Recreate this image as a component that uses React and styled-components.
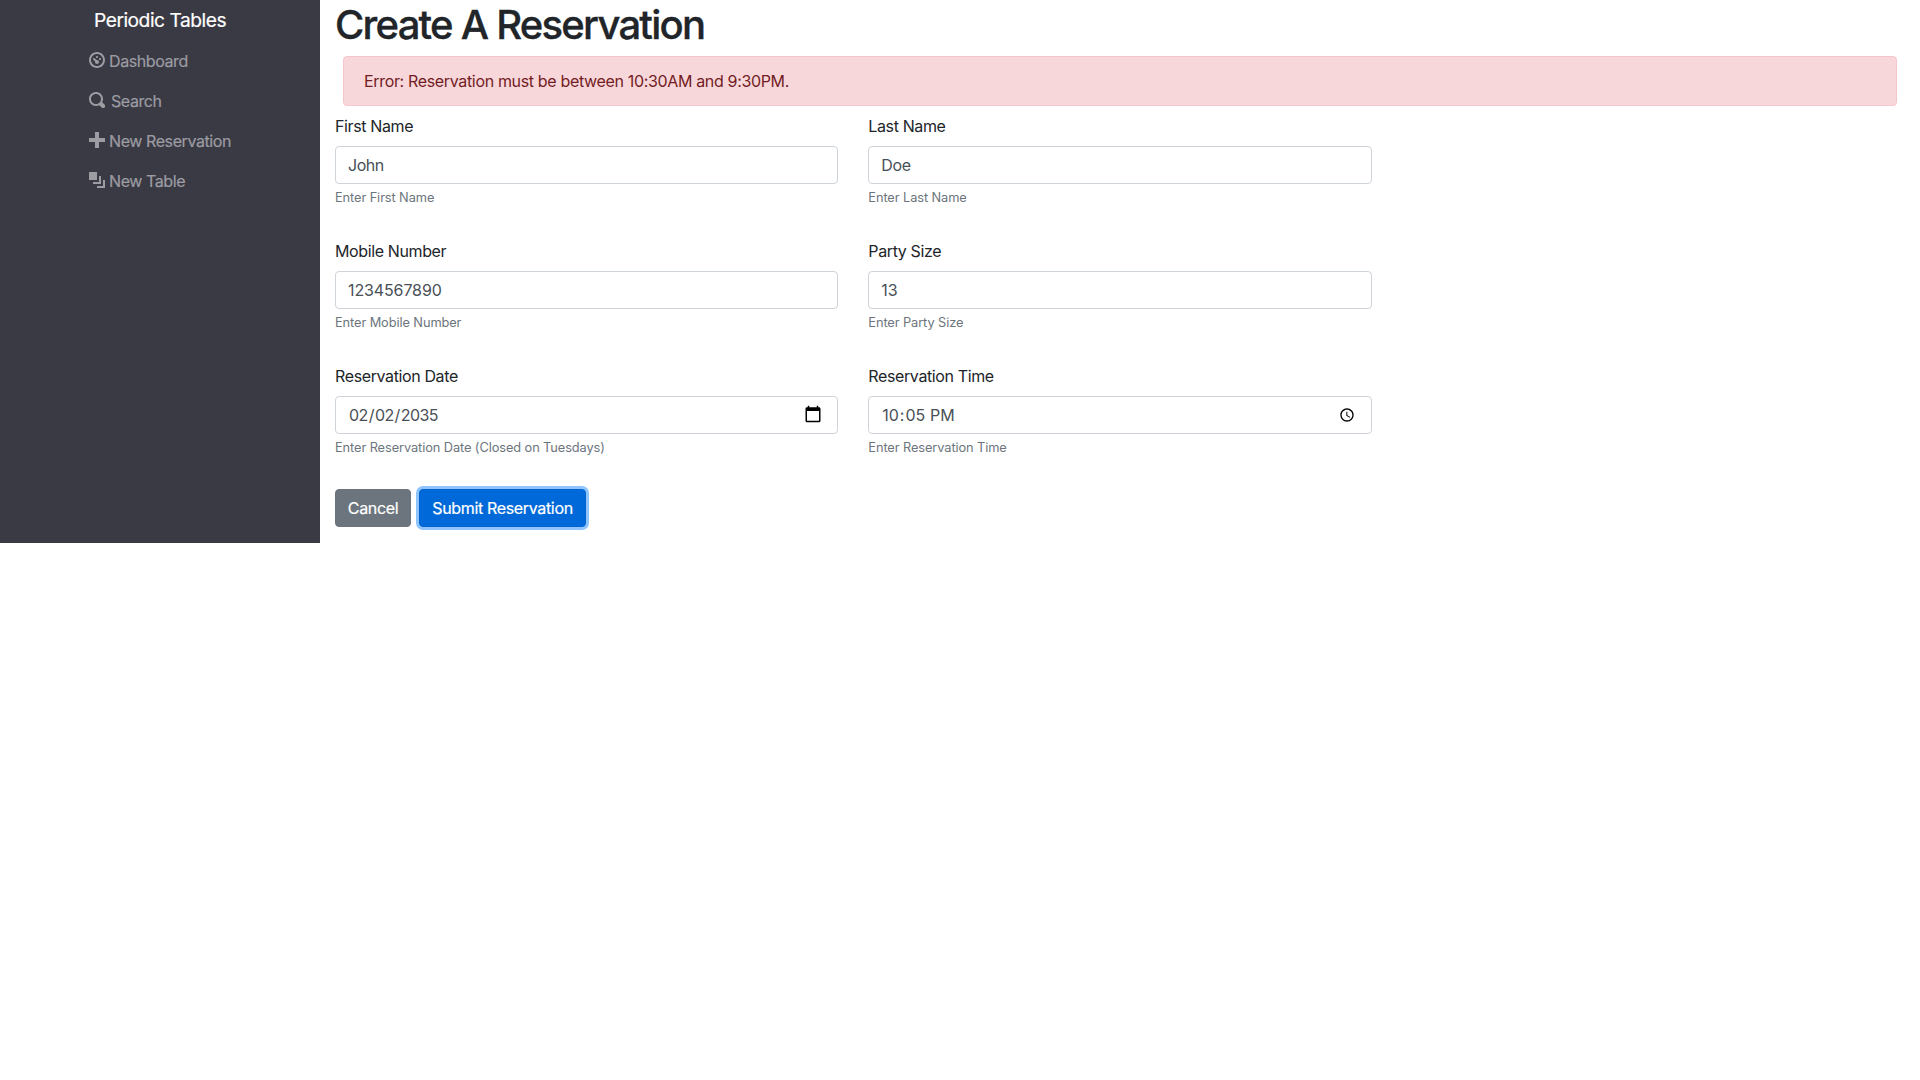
import React from "react";
import styled, { createGlobalStyle } from "styled-components";

const GlobalStyle = createGlobalStyle`
  *, *::before, *::after { box-sizing: border-box; }
  body {
    margin: 0;
    background: #fff;
    color: #212529;
    font-family: Inter, "Liberation Sans", sans-serif;
    font-size: 16px;
    line-height: 24px;
    letter-spacing: -0.34px;
  }
`;

const Page = styled.div`
  display: flex;
  align-items: stretch;
`;

const Sidebar = styled.nav`
  flex: 0 0 320px;
  height: 543px;
  padding: 5px 0 0 89px;
  background: #3a3a45;
  -webkit-text-stroke: 0.2px;
`;

const Brand = styled.a`
  display: block;
  padding-left: 5px;
  margin-bottom: 6px;
  color: #fff;
  font-size: 19.2px;
  line-height: 30px;
  letter-spacing: -0.48px;
`;

const NavList = styled.ul`
  list-style: none;
  margin: 0;
  padding: 0;
`;

const NavLink = styled.a`
  display: flex;
  align-items: center;
  height: 40px;
  gap: ${(p) => p.$gap || 4}px;
  color: #9c9ca2;
  letter-spacing: -0.41px;
`;

const NavIcon = styled.svg`
  display: block;
  width: 16px;
  height: 16px;
  margin-bottom: 2px;
  fill: currentColor;
`;

const Main = styled.main`
  flex: 1;
  padding: 0 15px;
`;

const Title = styled.h1`
  margin: 0;
  padding-top: 1px;
  height: 56px;
  font-size: 40px;
  line-height: 48px;
  font-weight: 500;
  letter-spacing: -1.76px;
  -webkit-text-stroke: 0.35px;
`;

const Alert = styled.div`
  margin: 0 8px 8px;
  padding: 12px 20px;
  border: 1px solid #f5c6cb;
  border-radius: 4px;
  background: #f8d7da;
  color: #721c24;
`;

const Fields = styled.div`
  display: grid;
  grid-template-columns: 503.33px 503.33px;
  column-gap: 30px;
  grid-auto-rows: 125px;
`;

const Label = styled.label`
  display: block;
  margin-bottom: 8px;
  letter-spacing: -0.38px;
`;

const calendarIcon = encodeURIComponent(
  '<svg xmlns="http://www.w3.org/2000/svg" viewBox="0 0 24 24"><path d="M20 3h-1V1h-2v2H7V1H5v2H4c-1.1 0-2 .9-2 2v16c0 1.1.9 2 2 2h16c1.1 0 2-.9 2-2V5c0-1.1-.9-2-2-2zm0 18H4V8h16v13z"/></svg>'
);

const Input = styled.input`
  display: block;
  width: 100%;
  height: 38px;
  padding: 6px 12px;
  border: 1px solid #ced4da;
  border-radius: 4px;
  background: #fff;
  color: #495057;
  font: inherit;
  letter-spacing: ${(p) => p.$tracking || "inherit"};
  outline: none;

  &[type="date"]::-webkit-calendar-picker-indicator {
    width: 18px;
    height: 18px;
    padding: 0;
    margin: 0 3px 2px 0;
    background: url("data:image/svg+xml,${calendarIcon}") center / 18px 18px no-repeat;
  }
`;

const Hint = styled.small`
  display: block;
  margin-top: 4px;
  color: #6c757d;
  font-size: 12.8px;
  line-height: 19.2px;
  letter-spacing: -0.09px;
`;

const Actions = styled.div`
  display: flex;
  gap: 8px;
`;

const Button = styled.button`
  width: ${(p) => p.$width}px;
  height: 38px;
  padding: 0;
  border: 1px solid ${(p) => (p.$primary ? "#0062cc" : "#6c757d")};
  border-radius: 4px;
  background: ${(p) => (p.$primary ? "#0069d9" : "#6c757d")};
  box-shadow: ${(p) => (p.$primary ? "0 0 0 3px #8fc5ff" : "none")};
  color: #fff;
  font: inherit;
  letter-spacing: inherit;
  -webkit-text-stroke: 0.2px;
`;

const NAV = [
  {
    label: "Dashboard",
    path: "M4 0c-2.2 0-4 1.8-4 4s1.8 4 4 4 4-1.8 4-4-1.8-4-4-4zm0 1c1.66 0 3 1.34 3 3s-1.34 3-3 3-3-1.34-3-3 1.34-3 3-3zm0 1c-.28 0-.5.22-.5.5s.22.5.5.5.5-.22.5-.5-.22-.5-.5-.5zm-1.66 1a.5.5 0 0 0-.19.84l.91.91c-.02.08-.06.16-.06.25 0 .55.45 1 1 1s1-.45 1-1-.45-1-1-1c-.09 0-.17.04-.25.06l-.91-.91a.5.5 0 0 0-.44-.16.5.5 0 0 0-.06 0zm3.16 0c-.28 0-.5.22-.5.5s.22.5.5.5.5-.22.5-.5-.22-.5-.5-.5z",
  },
  {
    label: "Search",
    gap: 6,
    path: "M3.5 0c-1.93 0-3.5 1.57-3.5 3.5s1.57 3.5 3.5 3.5c.59 0 1.17-.14 1.66-.41a1 1 0 0 0 .13.13l1 1a1.02 1.02 0 1 0 1.44-1.44l-1-1a1 1 0 0 0-.16-.13c.27-.49.44-1.06.44-1.66 0-1.93-1.55-3.5-3.5-3.5zm0 1c1.39 0 2.5 1.11 2.5 2.5 0 .66-.24 1.27-.66 1.72-.01.01-.02.02-.03.03a1 1 0 0 0-.13.13c-.44.4-1.04.63-1.69.63-1.39 0-2.5-1.11-2.5-2.5s1.11-2.5 2.5-2.5z",
  },
  { label: "New Reservation", path: "M3 0v3h-3v2h3v3h2v-3h3v-2h-3v-3h-2z" },
  {
    label: "New Table",
    path: "M0 0v4h4v-4h-4zm5 2v3h-3v1h4v-4h-1zm2 2v3h-3v1h4v-4h-1z",
  },
];

const FIELDS = [
  { id: "first_name", label: "First Name", value: "John", hint: "Enter First Name", tracking: "-0.45px" },
  { id: "last_name", label: "Last Name", value: "Doe", hint: "Enter Last Name", tracking: "-0.4px" },
  { id: "mobile_number", label: "Mobile Number", value: "1234567890", hint: "Enter Mobile Number", tracking: "-0.12px" },
  { id: "people", label: "Party Size", value: "13", hint: "Enter Party Size", tracking: "-0.12px" },
  { id: "reservation_date", label: "Reservation Date", type: "date", value: "2035-02-02", hint: "Enter Reservation Date (Closed on Tuesdays)", tracking: "-0.58px" },
  { id: "reservation_time", label: "Reservation Time", type: "time", value: "22:05", hint: "Enter Reservation Time", tracking: "-0.05px" },
];

export default function App() {
  return (
    <Page>
      <GlobalStyle />
      <Sidebar>
        <Brand>Periodic Tables</Brand>
        <NavList>
          {NAV.map((item) => (
            <li key={item.label}>
              <NavLink $gap={item.gap}>
                <NavIcon viewBox="0 0 8 8">
                  <path d={item.path} />
                </NavIcon>
                <span>{item.label}</span>
              </NavLink>
            </li>
          ))}
        </NavList>
      </Sidebar>
      <Main>
        <Title>Create A Reservation</Title>
        <Alert>Error: Reservation must be between 10:30AM and 9:30PM.</Alert>
        <form>
          <Fields>
            {FIELDS.map((f) => (
              <div key={f.id}>
                <Label htmlFor={f.id}>{f.label}</Label>
                <Input id={f.id} type={f.type || "text"} defaultValue={f.value} $tracking={f.tracking} />
                <Hint>{f.hint}</Hint>
              </div>
            ))}
          </Fields>
          <Actions>
            <Button type="button" $width={76}>Cancel</Button>
            <Button type="button" $primary $width={167}>Submit Reservation</Button>
          </Actions>
        </form>
      </Main>
    </Page>
  );
}
